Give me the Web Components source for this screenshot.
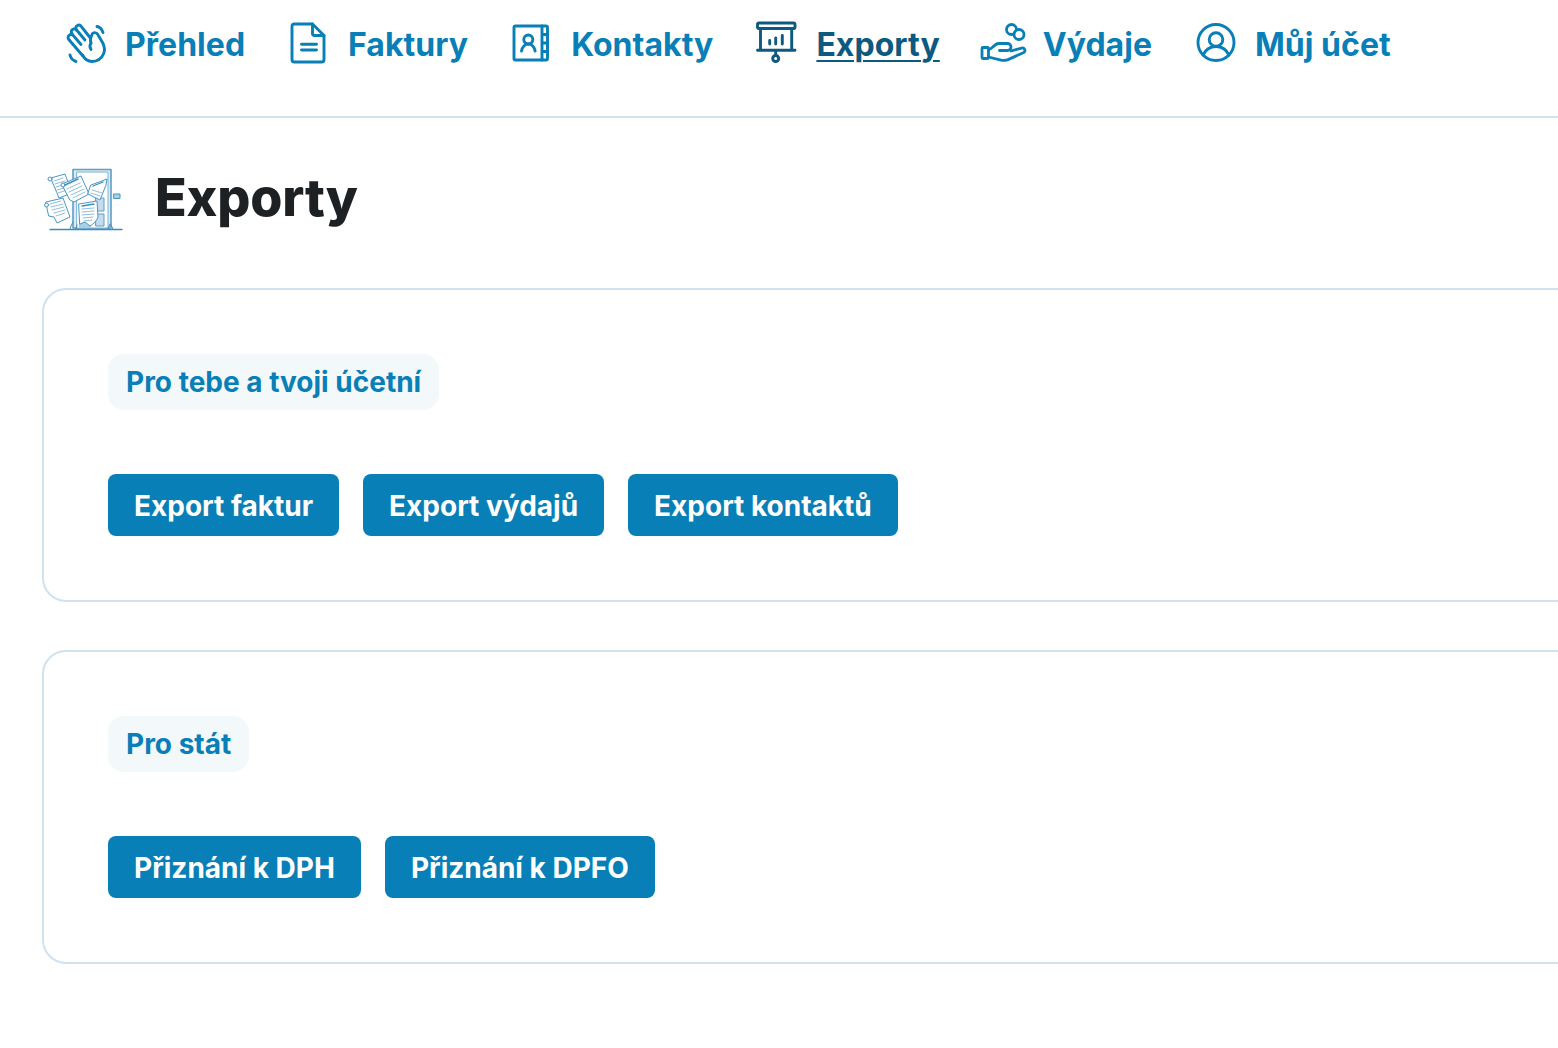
<!doctype html>
<html lang="cs"><head><meta charset="utf-8"><title>Exporty</title>
<style>
html,body{margin:0;padding:0;background:#fff;overflow:hidden}
body{font-family:Inter,"Liberation Sans",sans-serif;width:1558px;height:1048px}
</style></head><body>
<app-nav>
<nav-item label="Přehled"><svg viewBox="0 0 40 40" fill="none" stroke="currentColor" stroke-width="2.900" stroke-linecap="round" stroke-linejoin="round"><path d="M16.500 31.500 2.800 15.500a3 3 0 0 1 4.600-3.900L15 20.500M7.400 11.600 6 9.900a3 3 0 0 1 4.600-3.900L19 16"/><path d="M10.500 6 10 5a3 3 0 0 1 4.800-3.200L24 13.500"/><path d="M25 19c-1.500-3 0-6 1-8.500 1-2.500 4.500-2.500 5.800 0l5 8.500c2 4 2.200 7.500.7 11-2 4.500-6.500 7.500-11.500 7.500-3.500 0-7-1.700-9.500-6.500"/><path d="M25 19c-1.500 2-1.500 4 0 6.500"/><path d="M31 2.500c2.500.5 5 3 6 6M4 31c.7 3 3 5.500 6 6.500"/></svg></nav-item>
<nav-item label="Faktury"><svg viewBox="0 0 40 40" fill="none" stroke="currentColor" stroke-width="2.900" stroke-linecap="round" stroke-linejoin="round"><path d="M5.500 0H23.500L35 11.500V35.500A2.500 2.500 0 0 1 32.500 38H5.500A2.500 2.500 0 0 1 3 35.500V2.500A2.500 2.500 0 0 1 5.500 0Z"/><path d="M23.500 0V9.500a2 2 0 0 0 2 2H35M12.500 20.300H27.500M12.500 26H27.500"/></svg></nav-item>
<nav-item label="Kontakty"><svg viewBox="0 0 40 40" fill="none" stroke="currentColor" stroke-width="2.900" stroke-linecap="round" stroke-linejoin="round"><rect x="2" y="2" width="33.500" height="34" rx="1.500"/><path d="M30 2v34M30 10.500h5.500M30 19h5.500M30 27.500h5.500"/><circle cx="16.300" cy="15.500" r="4.500"/><path d="M9.500 27c.8-4 3.500-7 6.800-7s6 3 6.800 7"/></svg></nav-item>
<nav-item label="Exporty" active><svg viewBox="0 0 40 40" fill="none" stroke="currentColor" stroke-width="2.900" stroke-linecap="round" stroke-linejoin="round"><rect x="0.500" y="-1" width="37.500" height="5.500" rx="1.500"/><path d="M3.500 4.500V26.300M34.700 4.500V26.300M0.500 26.300H38M18.700 26.300V31.500"/><circle cx="18.700" cy="34.500" r="3"/><path d="M12.700 20V16.500M18.700 20V14M25.300 20V11.500"/></svg></nav-item>
<nav-item label="Výdaje" wide><svg viewBox="0 0 46 40" fill="none" stroke="currentColor" stroke-width="2.800" stroke-linecap="round" stroke-linejoin="round"><rect x="1" y="23.500" width="6.500" height="11" rx="1"/><path d="M7.500 25.500c4-.5 6-6 10-6h9a3.400 3.400 0 0 1 0 7h-8"/><path d="M7.500 33 21 36.300c2 .3 4 0 6-.7l15.800-7.100a2.500 2.500 0 0 0-2.300-4.400L30 27"/><circle cx="30.500" cy="5.500" r="5"/><circle cx="38" cy="10.500" r="5" fill="#fff"/></svg></nav-item>
<nav-item label="Můj účet"><svg viewBox="0 0 40 40" fill="none" stroke="currentColor" stroke-width="2.900" stroke-linecap="round" stroke-linejoin="round"><circle cx="20" cy="18.500" r="18"/><circle cx="20" cy="15.500" r="6.800"/><path d="M7 31c2.500-5 7.500-8.500 13-8.500s10.500 3.500 13 8.500"/></svg></nav-item>
</app-nav>
<page-title title-text="Exporty"></page-title>
<export-card label="Pro tebe a tvoji účetní">
<export-button>Export faktur</export-button><export-button>Export výdajů</export-button><export-button>Export kontaktů</export-button>
</export-card>
<export-card label="Pro stát">
<export-button>Přiznání k DPH</export-button><export-button>Přiznání k DPFO</export-button>
</export-card>
<script>
const def=(name,html)=>customElements.define(name,class extends HTMLElement{
  connectedCallback(){ if(this.shadowRoot) return; const r=this.attachShadow({mode:'open'}); r.innerHTML=typeof html==='function'?html(this):html; }
});
def('app-nav',`<style>:host{display:flex;box-sizing:border-box;height:118px;padding:0 0 0 66px;gap:44px;border-bottom:2px solid #cfe2ee;align-items:flex-start}</style><slot></slot>`);
def('nav-item',el=>`<style>
:host{display:flex;align-items:center;gap:19px;height:90px;font:700 32px/1 Inter,"Liberation Sans",sans-serif;letter-spacing:.03px;color:${el.hasAttribute('active')?'#0d5a80':'#087fb6'};white-space:nowrap}
.i{width:40px;height:40px;flex:none;display:flex;justify-content:center;margin-top:-2px}
::slotted(svg){flex:none;height:40px;width:${el.hasAttribute('wide')?'46px':'40px'};overflow:visible}
span{${el.hasAttribute('active')?'text-decoration:underline;text-underline-offset:4px;text-decoration-thickness:2px':''}}
</style><div class="i"><slot></slot></div><span>${el.getAttribute('label')}</span>`);
def('door-art',`<style>:host{display:block;width:80px;height:64px;flex:none;margin-top:4px}svg{display:block}</style>
<svg viewBox="0 0 80 64" width="80" height="64" fill="none" stroke="#4a97c4" stroke-width="1" stroke-linejoin="round" stroke-linecap="round">
<path d="M30 1.500H68V60H30z" fill="#dcebf5" stroke="#5c9fc8" stroke-width="1.600"/>
<path d="M34 4H65V60H34z" fill="#fff" stroke="#7db3d4"/>
<path d="M53 30h8v13h-8zM53 46h8v12h-8z" fill="#c4dcec" stroke="#5c9fc8"/>
<path d="M36 50h12v10H36z" fill="#a9cfe6" stroke="none"/>
<path d="M71 26h6v4.500h-6z" fill="#a9cfe6" stroke="#4a97c4"/>
<path d="M7 61.500H79" stroke="#3d8dbd" stroke-width="1.400"/>
<g fill="#fff">
<path d="M8 10 22 6l7 19-13 5-2-5z"/><circle cx="7" cy="11" r="2"/>
<path d="M11 13l9-3M12 16l10-3M13 19l10-3M14 22l10-3M15 25l9-3" stroke="#8fbfdc"/>
<path d="M3 34 20 30l7 19-13 6-3-6-5-1z"/><circle cx="3.500" cy="37" r="2"/>
<path d="M7 36l11-3M8 39l12-3M9 42l12-3M11 45l11-3M13 48l9-3" stroke="#8fbfdc"/>
<path d="M19 16 38 8l8 18-15 8-4-2z"/><circle cx="20" cy="17" r="2"/>
<path d="M22 17l13-6" stroke="#3d8dbd" stroke-width="1.500"/><path d="M24 21l13-6M26 24l13-6M28 27l13-6M30 30l12-6" stroke="#8fbfdc"/>
<path d="M48 17l16-6-1 6-6 15-12-6z"/>
<path d="M50 18l10-4" stroke="#3d8dbd" stroke-width="1.300"/><path d="M49 22l10 3M48 25l9 3" stroke="#8fbfdc"/>
<path d="M36 36l18-3 1 16c-1 4-5 7-8 9l-5-4-5 2z"/>
<path d="M39 38l12-2" stroke="#3d8dbd" stroke-width="1.300"/><path d="M39 41l12-1M39 44l12-1M39 47l12-1M40 50l10-1M41 53l8-1" stroke="#8fbfdc"/>
</g>
<path d="M27 61c1-3 2-5 3-7M33 61l1-4M65 61l2-5M70 61l-2-4" stroke="#3d8dbd"/>
</svg>`);
def('page-title',el=>`<style>:host{display:flex;align-items:center;gap:32px;margin:0 0 0 43px;height:170px;box-sizing:border-box;padding-bottom:10px}
h1{margin:0;font:800 52px/1 Inter,"Liberation Sans",sans-serif;letter-spacing:-.2px;color:#1e2124}</style><door-art></door-art><h1>${el.getAttribute('title-text')}</h1>`);
def('export-card',el=>`<style>:host{display:flex;flex-direction:column;align-items:flex-start;box-sizing:border-box;width:1600px;height:314px;margin:0 0 48px 42px;padding:64px;border:2px solid #cfe2ee;border-radius:24px;background:#fff}
.chip{box-sizing:border-box;height:56px;padding:0 18px;display:flex;align-items:center;background:#f3f8fb;border-radius:16px;font:700 28px/1 Inter,"Liberation Sans",sans-serif;color:#087fb6}
.row{display:flex;gap:24px;margin-top:64px}</style><div class="chip">${el.getAttribute('label')}</div><div class="row"><slot></slot></div>`);
def('export-button',`<style>:host{display:flex;align-items:center;box-sizing:border-box;height:62px;padding:2px 26px 0;background:#087fb6;border-radius:8px;color:#fff;font:700 28px/1 Inter,"Liberation Sans",sans-serif;white-space:nowrap}</style><slot></slot>`);
</script>
</body></html>
